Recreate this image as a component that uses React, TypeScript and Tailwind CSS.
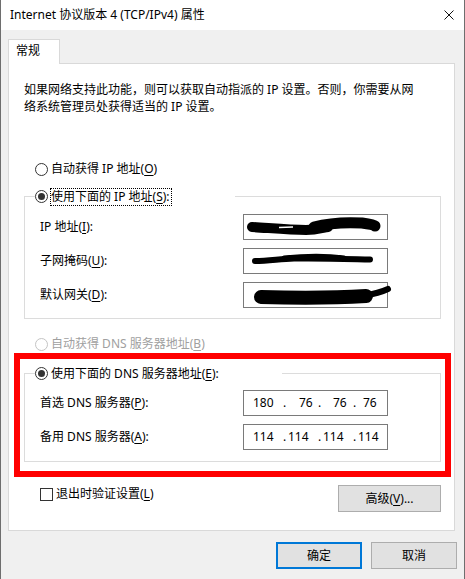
import React from "react";

const U = ({ c }: { c: string }) => <span className="underline underline-offset-[2px]">{c}</span>;

function Radio({ checked, disabled }: { checked?: boolean; disabled?: boolean }) {
  return (
    <span
      className={
        "w-[13px] h-[13px] rounded-full border bg-white flex items-center justify-center shrink-0 " +
        (disabled ? "border-[#c4c4c4]" : "border-[#333333]")
      }
    >
      {checked && <span className="w-[7px] h-[7px] rounded-full bg-[#333333]" />}
    </span>
  );
}

function Field({ children }: { children?: React.ReactNode }) {
  return (
    <div className="relative w-[145px] h-[26px] border border-[#7a7a7a] bg-white flex items-center">{children}</div>
  );
}

function Octets({ parts }: { parts: [string, string][] }) {
  return (
    <div className="flex items-center pl-[9px] text-[12px] leading-[18px] text-black whitespace-pre">
      {parts.map(([t, w], i) => (
        <span key={i} className={w}>
          {t}
        </span>
      ))}
    </div>
  );
}

export default function App() {
  return (
    <div className="w-[465px] h-[579px] bg-[#f0f0f0] border-x border-[#6e6e6e] flex flex-col text-[12px] leading-[18px] text-black font-['Noto_Sans','Noto_Sans_CJK_SC',sans-serif]">
      {/* title bar */}
      <div className="h-[30px] shrink-0 bg-white flex items-center justify-between pl-[9px] pr-[10px]">
        <span>Internet 协议版本 4 (TCP/IPv4) 属性</span>
        <svg width="10" height="10" viewBox="0 0 10 10" className="shrink-0">
          <path d="M0.5 0.5 L9.5 9.5 M9.5 0.5 L0.5 9.5" stroke="#111" strokeWidth="1" fill="none" />
        </svg>
      </div>

      {/* tab + panel */}
      <div className="flex flex-col pt-[9px] pl-[7px] pr-[9px]">
        <div className="relative z-10 -mb-px w-[52px] h-[25px] bg-white border-x border-t border-[#d9d9d9] pl-[7px] pt-[2px]">
          常规
        </div>
        <div className="h-[468px] bg-white border border-[#d9d9d9] pl-[15px] pr-[13px] flex flex-col">
          <p className="pt-[17px] leading-[17px] whitespace-nowrap">
            如果网络支持此功能，则可以获取自动指派的 IP 设置。否则，你需要从网
            <br />
            络系统管理员处获得适当的 IP 设置。
          </p>

          <div className="mt-[45px] h-[18px] flex items-center pl-[11px]">
            <Radio />
            <span className="ml-[2px] border border-transparent px-0 leading-[16px]">
              自动获得 IP 地址(<U c="O" />)
            </span>
          </div>

          <fieldset className="mt-[9px] border border-[#dcdcdc] pb-[10px]">
            <legend className="ml-[10px] w-[200px] h-[19px]">
              <div className="h-[19px] flex items-center">
                <Radio checked />
                <span className="ml-[2px] border border-dotted border-black leading-[16px] pr-px">
                  使用下面的 IP 地址(<U c="S" />):
                </span>
              </div>
            </legend>
            <div className="pl-[15px] pt-[8px] flex flex-col gap-[8px]">
              <div className="h-[26px] flex items-center">
                <span className="w-[203px]">
                  IP 地址(<U c="I" />):
                </span>
                <Field>
                  <svg className="absolute left-0 top-0 overflow-visible" width="145" height="26">
                    <path d="M8 12 C25 13 45 15 62 15 C72 15 78 13 84 12" stroke="#000" strokeWidth="10" strokeLinecap="round" fill="none" />
                    <path d="M70 12 C85 8 100 7 118 8 C125 9 130 10 131 11" stroke="#000" strokeWidth="11" strokeLinecap="round" fill="none" />
                    <path d="M35 12.5 L49 12" stroke="#fff" strokeWidth="1.3" fill="none" />
                  </svg>
                </Field>
              </div>
              <div className="h-[26px] flex items-center">
                <span className="w-[203px]">
                  子网掩码(<U c="U" />):
                </span>
                <Field>
                  <svg className="absolute left-0 top-0 overflow-visible" width="145" height="26">
                    <path d="M11 12 C25 12 35 10 50 9.5 C80 9 105 10 126 10.5" stroke="#000" strokeWidth="6" strokeLinecap="round" fill="none" />
                    <path d="M40 9 C60 7 85 7 100 9" stroke="#000" strokeWidth="5" strokeLinecap="round" fill="none" />
                  </svg>
                </Field>
              </div>
              <div className="h-[26px] flex items-center">
                <span className="w-[203px]">
                  默认网关(<U c="D" />):
                </span>
                <Field>
                  <svg className="absolute left-0 top-0 overflow-visible" width="145" height="26">
                    <path d="M17 14 C50 15 90 15 122 13" stroke="#000" strokeWidth="14" strokeLinecap="round" fill="none" />
                    <path d="M118 13 C130 11 138 9 144 6" stroke="#000" strokeWidth="6" strokeLinecap="round" fill="none" />
                  </svg>
                </Field>
              </div>
            </div>
          </fieldset>

          <div className="mt-[16px] h-[18px] flex items-center pl-[11px] text-[#a0a0a0]">
            <Radio disabled />
            <span className="ml-[2px] border border-transparent leading-[16px]">
              自动获得 DNS 服务器地址(<U c="B" />)
            </span>
          </div>

          {/* red annotation box */}
          <div className="-mx-[10px] border-[6px] border-[#ff0000] px-[4px] pt-[5px] pb-[9px]">
            <fieldset className="border border-[#dcdcdc] pb-[11px]">
              <legend className="ml-[10px] w-[247px] h-[19px]">
                <div className="h-[19px] flex items-center">
                  <Radio checked />
                  <span className="ml-[2px] border border-transparent leading-[16px]">
                    使用下面的 DNS 服务器地址(<U c="E" />):
                  </span>
                </div>
              </legend>
              <div className="pl-[15px] pt-[7px] flex flex-col gap-[8px]">
                <div className="h-[26px] flex items-center">
                  <span className="w-[203px]">
                    首选 DNS 服务器(<U c="P" />):
                  </span>
                  <Field>
                    <Octets
                      parts={[
                        ["180", "w-[30px]"],
                        [".", "w-[16px]"],
                        ["76", "w-[19px]"],
                        [".", "w-[15px]"],
                        ["76", "w-[20px]"],
                        [".", "w-[10px]"],
                        ["76", "w-[20px]"],
                      ]}
                    />
                  </Field>
                </div>
                <div className="h-[26px] flex items-center">
                  <span className="w-[203px]">
                    备用 DNS 服务器(<U c="A" />):
                  </span>
                  <Field>
                    <Octets
                      parts={[
                        ["114", "w-[30px]"],
                        [".", "w-[5px]"],
                        ["114", "w-[30px]"],
                        [".", "w-[5px]"],
                        ["114", "w-[30px]"],
                        [".", "w-[5px]"],
                        ["114", "w-[24px]"],
                      ]}
                    />
                  </Field>
                </div>
              </div>
            </fieldset>
          </div>

          <div className="mt-[8px] flex items-start justify-between">
            <div className="pl-[16px] h-[18px] flex items-center">
              <span className="w-[13px] h-[13px] border border-[#333333] bg-white shrink-0" />
              <span className="ml-[3px]">
                退出时验证设置(<U c="L" />)
              </span>
            </div>
            <button className="w-[103px] h-[27px] bg-[#e1e1e1] border border-[#adadad] flex items-center justify-center">
              高级(<U c="V" />)...
            </button>
          </div>
        </div>
      </div>

      {/* footer */}
      <div className="pt-[11px] pr-[7px] flex justify-end gap-[9px]">
        <button className="w-[86px] h-[27px] bg-[#e1e1e1] border-2 border-[#0078d7] flex items-center justify-center">
          确定
        </button>
        <button className="w-[86px] h-[27px] bg-[#e1e1e1] border border-[#adadad] flex items-center justify-center">
          取消
        </button>
      </div>
    </div>
  );
}
